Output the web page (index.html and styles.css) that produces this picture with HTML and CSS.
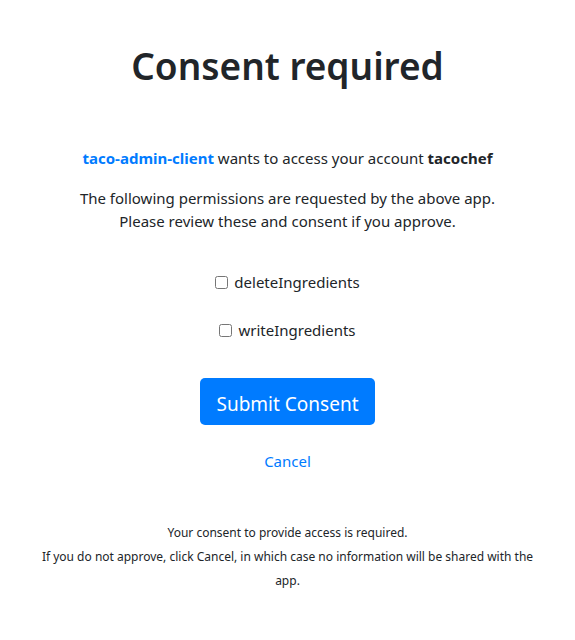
FILE: index.html
```html
<!DOCTYPE html>
<html lang="en">
<head>
<meta charset="utf-8">
<title>Consent required</title>
<link rel="stylesheet" href="styles.css">
</head>
<body>
<main class="consent">
  <h1 class="title">Consent required</h1>
  <p class="intro"><span class="client">taco-admin-client</span> wants to access your account <strong>tacochef</strong></p>
  <p class="explain">The following permissions are requested by the above app.<br>Please review these and consent if you approve.</p>
  <form class="form">
    <label class="scope"><input type="checkbox" class="check"> deleteIngredients</label>
    <label class="scope"><input type="checkbox" class="check"> writeIngredients</label>
    <button type="button" class="btn">Submit Consent</button>
    <a class="cancel" href="#">Cancel</a>
  </form>
  <p class="footer">Your consent to provide access is required.<br>If you do not approve, click Cancel, in which case no information will be shared with the app.</p>
</main>
</body>
</html>
```
FILE: styles.css
```css
html, body {
  margin: 0;
  padding: 0;
  background: #fff;
}
body {
  font-family: "Noto Sans", "Open Sans", sans-serif;
  color: #212529;
  font-size: 15px;
  line-height: 24px;
}
.consent {
  display: flex;
  flex-direction: column;
  align-items: center;
  text-align: center;
  padding: 42px 30px 0;
}
.title {
  margin: 0;
  font-size: 37px;
  line-height: 48px;
  font-weight: 600;
}
.intro {
  margin: 56px 0 0;
}
.client {
  color: #007bff;
  font-weight: 700;
}
.intro strong {
  font-weight: 700;
}
.explain {
  margin: 17px 0 0;
  line-height: 23px;
}
.form {
  display: flex;
  flex-direction: column;
  align-items: center;
  margin-top: 37px;
}
.scope {
  display: flex;
  align-items: center;
  gap: 6px;
  height: 24px;
}
.scope + .scope {
  margin-top: 24px;
}
.check {
  margin: 0;
  width: 13px;
  height: 13px;
}
.btn {
  margin-top: 36px;
  width: 175px;
  height: 47px;
  padding: 4px 0 0;
  border: none;
  border-radius: 5px;
  background: #007bff;
  color: #fff;
  font-family: inherit;
  font-size: 19px;
}
.cancel {
  margin-top: 24px;
  color: #007bff;
  text-decoration: none;
}
.footer {
  margin: 48px 0 0;
  font-size: 12px;
  max-width: 510px;
}
```
